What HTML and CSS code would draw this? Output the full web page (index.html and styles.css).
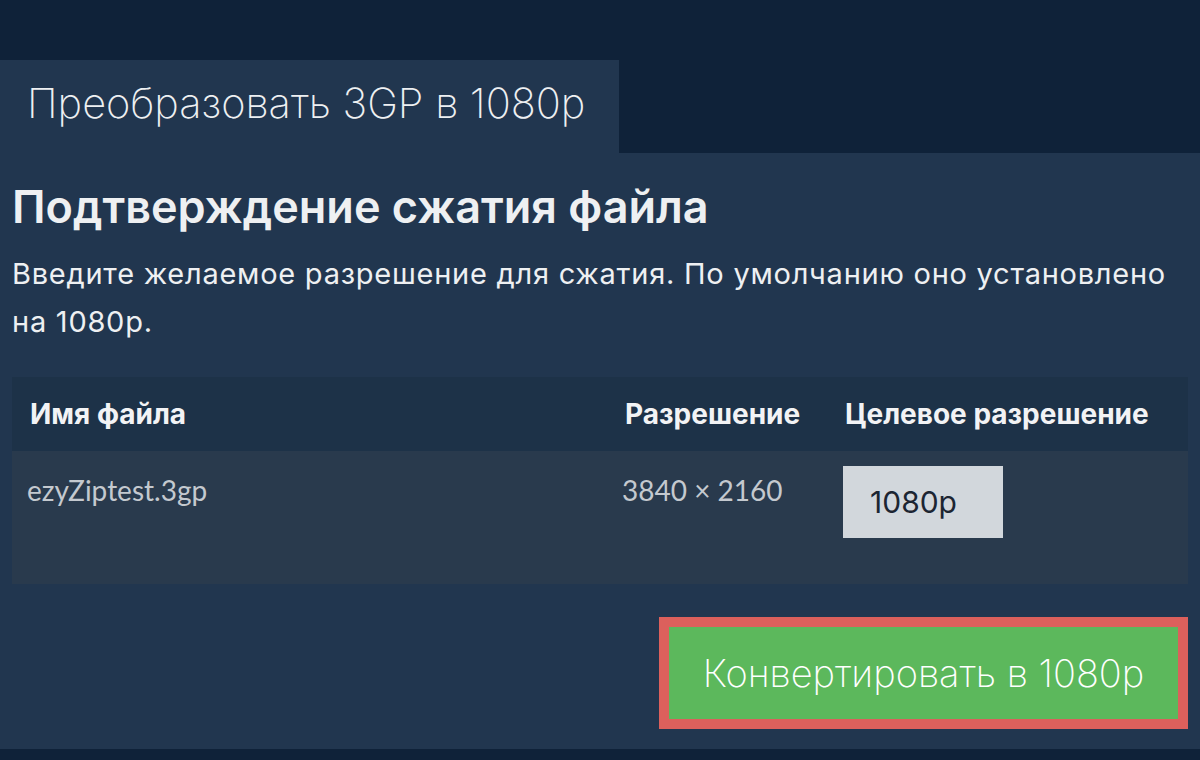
FILE: index.html
```html
<!DOCTYPE html>
<html lang="ru">
<head>
  <meta charset="UTF-8" />
  <title>Преобразовать 3GP в 1080p</title>
  <meta name="viewport" content="width=device-width, initial-scale=1" />
  <link rel="stylesheet" href="styles.css">
</head>
<body>
  <div class="page">
    <div class="tab">Преобразовать 3GP в 1080p</div>

    <div class="panel">
      <h1>Подтверждение сжатия файла</h1>
      <p class="lead">Введите желаемое разрешение для сжатия. По умолчанию оно установлено на 1080p.</p>

      <table class="files">
        <thead>
          <tr>
            <th class="col-name">Имя файла</th>
            <th class="col-res">Разрешение</th>
            <th class="col-target">Целевое разрешение</th>
          </tr>
        </thead>
        <tbody>
          <tr>
            <td>ezyZiptest.3gp</td>
            <td>3840 × 2160</td>
            <td><div class="res-input">1080p</div></td>
          </tr>
        </tbody>
      </table>

      <div class="actions">
        <button class="convert-btn" type="button">Конвертировать в 1080p</button>
      </div>
    </div>
  </div>
</body>
</html>
```

FILE: styles.css
```css
body {
  margin: 0;
  padding: 0;
  background: #0f2239;
  font-family: Inter, 'Noto Sans', sans-serif;
  color: #eef0f2;
}

.page {
  padding-top: 60px;
}

.tab {
  width: 592px;
  height: 93px;
  padding-left: 27px;
  background: #21364f;
  font-size: 41.5px;
  font-weight: 200;
  line-height: 86px;
  color: #eef0f2;
}

.panel {
  height: 596px;
  background: #21364f;
  padding: 0 12px;
  box-sizing: border-box;
  overflow: hidden;
}

h1 {
  margin: 0;
  padding-top: 27px;
  font-size: 45px;
  font-weight: 600;
  line-height: 54px;
}

.lead {
  margin: 16px 0 0;
  font-size: 29px;
  letter-spacing: 0.75px;
  line-height: 48px;
}

.files {
  width: 100%;
  margin-top: 31px;
  border-collapse: collapse;
}

.files th {
  background: #1d3248;
  height: 74px;
  padding: 0 18px;
  text-align: left;
  font-size: 28px;
  font-weight: bold;
  color: #f2f3f5;
}

.files td {
  background: #293a4d;
  height: 133px;
  padding: 22px 15px 0;
  box-sizing: border-box;
  vertical-align: top;
  font-family: Lato, 'Noto Sans', sans-serif;
  font-size: 28px;
  color: #c4c9cf;
}

.files td:last-child {
  padding: 15px 18px 0;
}

.col-name {
  width: 559px;
}

.col-res {
  width: 184px;
}

.res-input {
  width: 160px;
  height: 72px;
  margin-left: -2px;
  box-sizing: border-box;
  padding-left: 27px;
  background: #d2d7dc;
  color: #1c2532;
  font-family: Inter, sans-serif;
  font-size: 30px;
  line-height: 72px;
}

.actions {
  display: flex;
  justify-content: flex-end;
  margin-top: 33px;
}

.convert-btn {
  width: 529px;
  height: 112px;
  background: #5cb85c;
  border: 10px solid #dc605c;
  color: #ffffff;
  font-family: Inter, sans-serif;
  font-size: 38px;
  font-weight: 200;
  cursor: pointer;
}
```
